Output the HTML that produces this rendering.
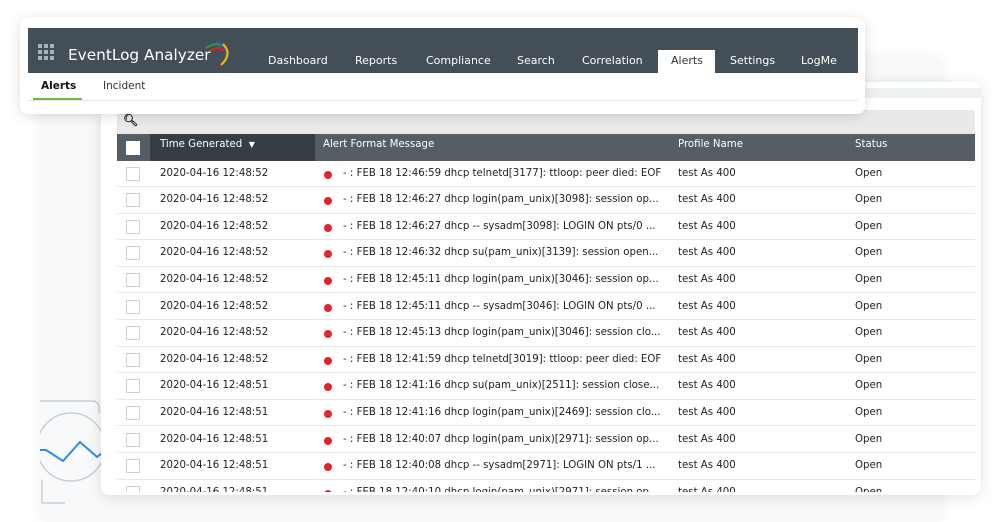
<!DOCTYPE html>
<html><head><meta charset="utf-8"><style>
*{margin:0;padding:0;box-sizing:border-box}
body{width:1000px;height:522px;background:#fff;position:relative;overflow:hidden;font-family:"DejaVu Sans","Liberation Sans",sans-serif}
.abs{position:absolute}
.back{left:40px;top:56px;width:903px;height:466px;background:#f8f9fa;border-radius:10px;box-shadow:0 0 12px rgba(0,0,0,.05)}
.panel{left:101px;top:82px;width:880px;height:413px;background:#fff;border-radius:8px;box-shadow:0 2px 14px rgba(0,0,0,.12);overflow:hidden}
.hdr{left:20px;top:18px;width:845px;height:96px;background:#fff;border-radius:8px;box-shadow:0 2px 12px rgba(0,0,0,.14)}
.bar{left:28px;top:28px;width:830px;height:45px;background:#434e56}
.nav{position:absolute;top:54px;font-size:11px;color:#fff}
.sub{position:absolute;font-size:10.5px;color:#333}
.row{position:absolute;left:117px;width:858px;height:26.6px;border-bottom:1px solid #e6e6e6;font-size:10.2px;color:#222}
.row span{position:absolute;top:7px;white-space:nowrap}
.cb{position:absolute;left:9px;top:6px;width:14px;height:14px;border:1px solid #cfcfcf;background:#fff}
.dot{position:absolute;left:207px;top:10px;width:8px;height:8px;border-radius:50%;background:#e0262c}
.th{position:absolute;top:57px;font-size:10.2px;color:#fff}
</style></head><body>
<div class="abs back"></div>
<svg class="abs" style="left:40px;top:395px" width="100" height="110" viewBox="0 0 100 110">
<path d="M0 6 H53 a6 6 0 0 1 6 6 V18" fill="none" stroke="#c5d1d4" stroke-width="1.5"/>
<path d="M2 85 V108 M2 108 H25" fill="none" stroke="#c5d1d4" stroke-width="1.5"/>
<circle cx="31" cy="52" r="34" fill="none" stroke="#c5d1d4" stroke-width="1.5"/>
<path d="M0 55 L6 55 L23 66 L40 47 L57 62 L62 58" fill="none" stroke="#2b8be6" stroke-width="2"/>
</svg>
<div class="abs panel">
  <div class="abs" style="left:0;top:6px;width:880px;height:10px;background:#eef1f4"></div>
  <div class="abs" style="left:16px;top:28px;width:858px;height:24px;background:#e9e9e9"></div>
  <div class="abs" style="left:22px;top:31px;font-size:12px;font-weight:bold;color:#222">&#x1F50D;&#xFE0E;</div>
  <div class="abs" style="left:16px;top:52px;width:858px;height:27px;background:#545e64"></div>
  <div class="abs" style="left:49px;top:52px;width:165px;height:27px;background:#353e44"></div>
  <div class="abs" style="left:25px;top:59px;width:14px;height:14px;background:#fff"></div>
  <div class="th" style="left:59px">Time Generated &nbsp;<span style="font-size:8px">▼</span></div>
  <div class="th" style="left:222px">Alert Format Message</div>
  <div class="th" style="left:577px">Profile Name</div>
  <div class="th" style="left:754px">Status</div>
</div>
<div id="rows"></div>
<div class="abs hdr"></div>
<div class="abs bar"></div>
<div class="abs" style="left:38px;top:44px;display:grid;grid-template-columns:repeat(3,4px);gap:2px">
<i style="width:4px;height:4px;background:#aab3b8"></i><i style="width:4px;height:4px;background:#aab3b8"></i><i style="width:4px;height:4px;background:#aab3b8"></i><i style="width:4px;height:4px;background:#aab3b8"></i><i style="width:4px;height:4px;background:#aab3b8"></i><i style="width:4px;height:4px;background:#aab3b8"></i><i style="width:4px;height:4px;background:#aab3b8"></i><i style="width:4px;height:4px;background:#aab3b8"></i><i style="width:4px;height:4px;background:#aab3b8"></i>
</div>
<div class="abs" style="left:68px;top:46px;font-size:15.3px;color:#fff">EventLog Analyzer</div>
<svg class="abs" style="left:198px;top:38px" width="34" height="30" viewBox="0 0 34 30">
<path d="M8 10 Q18 3 27 9" stroke="#2d9a3a" stroke-width="2.2" fill="none"/>
<path d="M12 13 Q20 7 26 13" stroke="#d22" stroke-width="2.2" fill="none"/>
<path d="M18 4 Q30 6 28 19" stroke="#1f5fc8" stroke-width="2.2" fill="none"/>
<path d="M25 6 Q35 16 23 27" stroke="#f2b705" stroke-width="2.2" fill="none"/>
</svg>
<div class="nav" style="left:268px">Dashboard</div>
<div class="nav" style="left:355px">Reports</div>
<div class="nav" style="left:426px">Compliance</div>
<div class="nav" style="left:517px">Search</div>
<div class="nav" style="left:582px">Correlation</div>
<div class="abs" style="left:658px;top:50px;width:57px;height:24px;background:#fff"></div>
<div class="nav" style="left:671px;color:#333">Alerts</div>
<div class="nav" style="left:730px">Settings</div>
<div class="nav" style="left:801px">LogMe</div>
<div class="sub" style="left:41px;top:80px;font-weight:bold;color:#111">Alerts</div>
<div class="abs" style="left:33px;top:98px;width:49px;height:2px;background:#6dbb3c"></div>
<div class="sub" style="left:103px;top:80px">Incident</div>
<div class="abs" style="left:28px;top:100px;width:830px;height:1px;background:#e5e5e5"></div>
<script>
const d=[
["2020-04-16 12:48:52","- : FEB 18 12:46:59 dhcp telnetd[3177]: ttloop: peer died: EOF"],
["2020-04-16 12:48:52","- : FEB 18 12:46:27 dhcp login(pam_unix)[3098]: session op..."],
["2020-04-16 12:48:52","- : FEB 18 12:46:27 dhcp -- sysadm[3098]: LOGIN ON pts/0 ..."],
["2020-04-16 12:48:52","- : FEB 18 12:46:32 dhcp su(pam_unix)[3139]: session open..."],
["2020-04-16 12:48:52","- : FEB 18 12:45:11 dhcp login(pam_unix)[3046]: session op..."],
["2020-04-16 12:48:52","- : FEB 18 12:45:11 dhcp -- sysadm[3046]: LOGIN ON pts/0 ..."],
["2020-04-16 12:48:52","- : FEB 18 12:45:13 dhcp login(pam_unix)[3046]: session clo..."],
["2020-04-16 12:48:52","- : FEB 18 12:41:59 dhcp telnetd[3019]: ttloop: peer died: EOF"],
["2020-04-16 12:48:51","- : FEB 18 12:41:16 dhcp su(pam_unix)[2511]: session close..."],
["2020-04-16 12:48:51","- : FEB 18 12:41:16 dhcp login(pam_unix)[2469]: session clo..."],
["2020-04-16 12:48:51","- : FEB 18 12:40:07 dhcp login(pam_unix)[2971]: session op..."],
["2020-04-16 12:48:51","- : FEB 18 12:40:08 dhcp -- sysadm[2971]: LOGIN ON pts/1 ..."],
["2020-04-16 12:48:51","- : FEB 18 12:40:10 dhcp login(pam_unix)[2971]: session op..."]];
let h="";d.forEach((r,i)=>{const t=160.5+i*26.6;
h+=`<div class="row" style="top:${t}px${i==12?';height:12px;overflow:hidden;border:0':''}"><div class="cb"></div><span style="left:43px">${r[0]}</span><div class="dot"></div><span style="left:226px">${r[1]}</span><span style="left:561px">test As 400</span><span style="left:738px">Open</span></div>`});
document.getElementById("rows").innerHTML=h;
</script>
</body></html>
